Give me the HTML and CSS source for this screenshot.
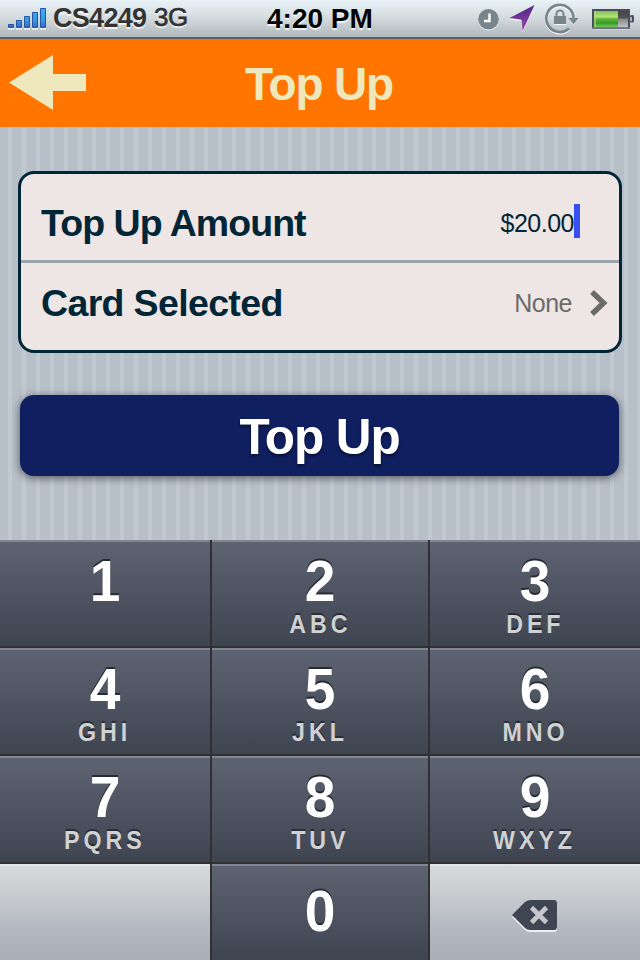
FILE: index.html
```html
<!DOCTYPE html>
<html lang="en">
<head>
<meta charset="utf-8">
<title>Top Up</title>
<link rel="stylesheet" href="styles.css">
</head>
<body>
<div class="screen">
  <div class="status">
    <div class="carrier">
      <svg class="signal" width="40" height="22" viewBox="0 0 40 22">
        <defs><linearGradient id="sig" x1="0" y1="0" x2="0" y2="20" gradientUnits="userSpaceOnUse"><stop offset="0" stop-color="#39b0ef"/><stop offset=".65" stop-color="#3799dc"/><stop offset="1" stop-color="#3c5fbb"/></linearGradient></defs>
        <path d="M0 20.700h6M8 20.700h6M16 20.700h6M24 20.700h6M32 20.700h6" stroke="#f5f8fa" stroke-width="1.500"/>
        <g fill="url(#sig)" stroke="#2554a8"><path d="M.5 16.500h5v3h-5zM8.500 12.500h5v7h-5zM16.500 8.500h5v11h-5zM24.500 4.500h5v15h-5zM32.500 .5h5v19h-5z"/></g>
      </svg>
      <span class="name">CS4249</span><span class="net">3G</span>
    </div>
    <div class="clock">4:20 PM</div>
    <svg class="indicators" width="180" height="37" viewBox="460 0 180 37">
      <defs>
        <linearGradient id="loc" x1="0" y1="5" x2="0" y2="31" gradientUnits="userSpaceOnUse"><stop offset="0" stop-color="#4c2585"/><stop offset="1" stop-color="#9c4bab"/></linearGradient>
        <linearGradient id="grn" x1="0" y1="0" x2="0" y2="1"><stop offset="0" stop-color="#7fbd55"/><stop offset=".35" stop-color="#b5e47b"/><stop offset=".5" stop-color="#5cb833"/><stop offset=".75" stop-color="#38962c"/><stop offset="1" stop-color="#73c954"/></linearGradient>
        <linearGradient id="emp" x1="0" y1="0" x2="0" y2="1"><stop offset="0" stop-color="#454545"/><stop offset=".45" stop-color="#555"/><stop offset=".5" stop-color="#858585"/><stop offset="1" stop-color="#c5c5c5"/></linearGradient>
      </defs>
      <circle cx="488.500" cy="20" r="10.300" fill="#f5f8fa"/><circle cx="488.500" cy="19.200" r="10.300" fill="#78858a"/>
      <path d="M489.500 13.500v7.500h-5.500" fill="none" stroke="#fff" stroke-width="2.400"/>
      <path d="M534.500 6.500L522.500 32.500l-1.500-11.500-11.500-1.500z" fill="#f5f8fa"/>
      <path d="M534.500 5L522.500 31.300l-1-11.600L509.500 18z" fill="url(#loc)"/>
      <g>
        <path d="M569 29.500A13.600 13.600 0 1 1 573.500 19.500" fill="none" stroke="#f5f8fa" stroke-width="3"/>
        <path d="M569 28.500A13.600 13.600 0 1 1 573.500 18.500" fill="none" stroke="#78858a" stroke-width="2.700"/>
        <path d="M568.500 19h10l-5 6z" fill="#f5f8fa"/><path d="M568.300 18h10.400l-5.200 6.300z" fill="#78858a"/>
        <path d="M554 17h12v8h-12z" fill="#f5f8fa"/><path d="M554 16h12v8h-12z" fill="#78858a"/>
        <path d="M556.500 17v-3a3.500 3.500 0 0 1 7 0v3" fill="none" stroke="#78858a" stroke-width="2"/>
      </g>
      <rect x="593" y="10.500" width="36" height="18.800" rx="1" fill="#f5f8fa"/>
      <rect x="630" y="15" width="4" height="7.500" rx="1.500" fill="#4b4c60"/><rect x="630" y="17" width="2" height="4" fill="#b1b4c4"/>
      <rect x="593" y="10" width="36" height="18" fill="#dfe6e6" stroke="#4b4c60" stroke-width="2"/>
      <path d="M592 28h38" stroke="#737487" stroke-width="2"/>
      <rect x="594" y="11" width="24" height="16" fill="url(#grn)"/><rect x="618" y="11" width="10" height="16" fill="url(#emp)"/>
      <rect x="594" y="11" width="2" height="16" fill="#a6dc78" opacity=".65"/>
    </svg>
  </div>
  <header class="nav">
    <svg class="back" width="77" height="55" viewBox="0 0 77 55"><path d="M0 27.500L44 0v19h33v17H44v19z" fill="#f0e8bd"/></svg>
    <h1 class="title">Top Up</h1>
  </header>
  <main class="content">
    <div class="form">
      <div class="row amount"><span class="label">Top Up Amount</span><span class="value">$20.00</span><i class="caret"></i></div>
      <div class="row card"><span class="label">Card Selected</span><span class="value">None</span>
        <svg class="chevron" width="18" height="28" viewBox="0 0 18 28"><path d="M2 3l11.500 11L2 25" fill="none" stroke="#6b6b6b" stroke-width="5.500"/></svg>
      </div>
    </div>
    <button class="submit">Top Up</button>
  </main>
  <div class="keypad">
    <div class="key"><b>1</b></div>
    <div class="key"><b>2</b><span>ABC</span></div>
    <div class="key"><b>3</b><span>DEF</span></div>
    <div class="key"><b>4</b><span>GHI</span></div>
    <div class="key"><b>5</b><span>JKL</span></div>
    <div class="key"><b>6</b><span>MNO</span></div>
    <div class="key"><b>7</b><span>PQRS</span></div>
    <div class="key"><b>8</b><span>TUV</span></div>
    <div class="key"><b>9</b><span>WXYZ</span></div>
    <div class="key light"></div>
    <div class="key zero"><b>0</b></div>
    <div class="key light">
      <svg class="delete" width="46" height="32" viewBox="0 0 46 32">
        <path d="M0 17L12.500 4.500Q15 2 18 2H42q3 0 3 3v24q0 3-3 3H18q-3 0-5-2z" fill="#eeeff1"/>
        <path d="M0 15L12.500 2.500Q15 0 18 0H42q3 0 3 3v24q0 3-3 3H18q-3 0-5-2z" fill="#3f4553"/>
        <path d="M19.500 7.500l15 15M34.500 7.500l-15 15" stroke="#c5c7cb" stroke-width="4.600"/>
      </svg>
    </div>
  </div>
</div>
</body>
</html>
```

FILE: styles.css
```css
* { box-sizing: border-box; }
body { margin: 0; font-family: "Liberation Sans", Arial, sans-serif; }
.screen { width: 640px; height: 960px; display: flex; flex-direction: column; overflow: hidden; }
.status {
  height: 39px; display: grid; grid-template-columns: 230px 230px 180px;
  border-bottom: 2px solid #5b6065;
  background: linear-gradient(#eaf3f8, #d2dadd 50%, #b0b7bb);
  text-shadow: 0 2px 1px rgba(255,255,255,.75);
}
.carrier { display: flex; padding-left: 8px; color: #333; }
.signal { margin-top: 8px; }
.name { font-weight: bold; font-size: 27px; line-height: 36px; margin-left: 5px; width: 101px; letter-spacing: -.7px; }
.net { font-size: 26px; line-height: 34px; letter-spacing: -.5px; -webkit-text-stroke: .7px #333; }
.clock { font-weight: bold; font-size: 28px; line-height: 37px; padding-left: 37px; }
.nav { height: 88px; display: grid; grid-template-columns: 86px 1fr 86px; align-items: center; background: #ff7500; color: #f0e8bd; }
.back { margin: -1px 0 0 9px; }
.title { margin: 0; font-size: 46px; line-height: 50px; text-align: center; padding: 2px 2px 0 0; letter-spacing: -1.2px; }
.content {
  height: 413px; padding: 44px 18px 0;
  background: repeating-linear-gradient(90deg, #b7bfc9 0 8px, #c0c8d0 8px 12px, #b7bfc9 12px 14px);
}
.form { height: 182px; border: 3px solid #012637; border-radius: 16px; background: #eee6e4; color: #012637; }
.row { display: flex; align-items: center; padding-left: 20px; }
.amount { height: 89px; border-bottom: 3px solid #98a4aa; padding-right: 39px; padding-top: 11px; }
.card { height: 87px; padding-right: 11px; padding-bottom: 7px; }
.label { flex: 1; font-weight: bold; font-size: 37.5px; line-height: 42px; letter-spacing: -.95px; }
.card .label { letter-spacing: -.65px; }
.value { font-size: 25px; line-height: 30px; letter-spacing: -.5px; }
.card .value { color: #6b6b6b; }
.caret { width: 6px; height: 34px; background: #3850f0; margin-top: -4px; }
.chevron { margin-left: 18px; }
.submit {
  display: block; width: 599px; height: 81px; margin: 42px 0 0 2px; padding: 2px 0 0; border: 0; border-radius: 14px;
  background: #101f5f; color: #fff; font: bold 49.5px/56px "Liberation Sans", Arial, sans-serif; letter-spacing: -1.1px;
  text-shadow: 0 2px 3px rgba(0,0,0,.5); box-shadow: 0 2px 8px rgba(0,0,0,.55);
}
.keypad {
  height: 420px; display: grid; grid-template-columns: 210px 216px 210px; grid-template-rows: 106px 106px 106px 96px;
  gap: 2px; background: #303030;
}
.key {
  display: flex; flex-direction: column; align-items: center; border-top: 2px solid #808693;
  background: linear-gradient(#5d6371, #3f4451); padding-top: 9px;
}
.key b { color: #fff; font-size: 58px; line-height: 60px; letter-spacing: -1px; text-shadow: 0 -2px 0 #272a32; transform: scaleX(.95); }
.key span {
  color: #cfd1d3; font-weight: bold; font-size: 25px; line-height: 26px; letter-spacing: 4.2px; margin-right: 0;
  text-shadow: 0 -2px 0 #292d35; transform: scaleX(.93);
}
.zero { padding-top: 15px; }
.light { border-top-color: #e2e3e5; background: linear-gradient(#d8d9dc, #bfc2c6 50%, #b6bac3 62%, #a8adb6); }
.delete { margin-top: 25px; }
```
